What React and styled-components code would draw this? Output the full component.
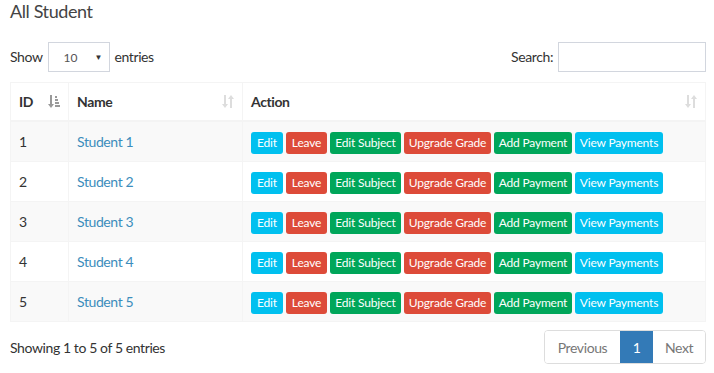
import styled, { createGlobalStyle } from "styled-components";

const GlobalStyle = createGlobalStyle`
  html, body {
    margin: 0;
    padding: 0;
    background: #fff;
  }
  body {
    font-family: Lato, "Open Sans", sans-serif;
    font-size: 14px;
    letter-spacing: -0.4px;
    color: #333;
  }
`;

const students = [1, 2, 3, 4, 5].map((n) => ({ id: n, name: `Student ${n}` }));

const actions = [
  { text: "Edit", color: "#00c0ef", w: 32 },
  { text: "Leave", color: "#dd4b39", w: 41 },
  { text: "Edit Subject", color: "#00a65a", w: 71 },
  { text: "Upgrade Grade", color: "#dd4b39", w: 87 },
  { text: "Add Payment", color: "#00a65a", w: 78 },
  { text: "View Payments", color: "#00c0ef", w: 88 },
];

function SortAsc() {
  return (
    <svg width="12" height="14" viewBox="0 0 12 14">
      <g fill="#999">
        <rect x="2" y="0" width="2" height="9" />
        <polygon points="0,9 6,9 3,13" />
        <rect x="7" y="1" width="2" height="2" />
        <rect x="7" y="4" width="3" height="2" />
        <rect x="7" y="7" width="4" height="2" />
        <rect x="7" y="10" width="5" height="2" />
      </g>
    </svg>
  );
}

function SortBoth() {
  return (
    <svg width="12" height="14" viewBox="0 0 12 14">
      <g fill="#ddd">
        <rect x="2" y="0" width="2" height="9" />
        <polygon points="0,9 6,9 3,13" />
        <rect x="8" y="4" width="2" height="9" />
        <polygon points="6,4 12,4 9,0" />
      </g>
    </svg>
  );
}

export default function App() {
  return (
    <Page>
      <GlobalStyle />
      <Title>All Student</Title>
      <Controls>
        <Label>
          Show
          <Select>
            <span>10</span>
            <Caret>▼</Caret>
          </Select>
          entries
        </Label>
        <Label>
          Search:
          <SearchInput />
        </Label>
      </Controls>
      <Table>
        <colgroup>
          <col style={{ width: 58 }} />
          <col style={{ width: 174 }} />
          <col />
        </colgroup>
        <thead>
          <tr>
            <Th>
              <HeadCell>
                ID <SortAsc />
              </HeadCell>
            </Th>
            <Th>
              <HeadCell>
                Name <SortBoth />
              </HeadCell>
            </Th>
            <Th>
              <HeadCell>
                Action <SortBoth />
              </HeadCell>
            </Th>
          </tr>
        </thead>
        <tbody>
          {students.map((s, i) => (
            <Row key={s.id} $striped={i % 2 === 0}>
              <Td>{s.id}</Td>
              <Td>
                <NameLink href="#">{s.name}</NameLink>
              </Td>
              <Td>
                <Buttons>
                  {actions.map((a) => (
                    <ActionButton key={a.text} $color={a.color} $w={a.w}>
                      {a.text}
                    </ActionButton>
                  ))}
                </Buttons>
              </Td>
            </Row>
          ))}
        </tbody>
      </Table>
      <Footer>
        <Info>Showing 1 to 5 of 5 entries</Info>
        <Pagination>
          <PageItem $w={75}>Previous</PageItem>
          <PageItem $w={33} $active>
            1
          </PageItem>
          <PageItem $w={52}>Next</PageItem>
        </Pagination>
      </Footer>
    </Page>
  );
}

const Page = styled.div`
  padding: 0 8px 0 10px;
  width: 696px;
`;

const Title = styled.h3`
  margin: 0;
  font-size: 18px;
  font-weight: 400;
  color: #444;
  line-height: 22px;
`;

const Controls = styled.div`
  display: flex;
  justify-content: space-between;
  align-items: center;
  margin-top: 20px;
  height: 30px;
`;

const Label = styled.label`
  display: flex;
  align-items: center;
  gap: 5px;
  font-size: 14px;
  color: #333;
  margin-top: -2px;
`;

const Select = styled.div`
  box-sizing: border-box;
  width: 62px;
  height: 30px;
  margin-top: 2px;
  border: 1px solid #d2d6de;
  display: flex;
  align-items: center;
  justify-content: space-between;
  padding: 0 6px 0 15px;
  font-size: 12px;
  letter-spacing: 0;
  color: #555;
`;

const Caret = styled.span`
  font-size: 8px;
  color: #333;
`;

const SearchInput = styled.div`
  box-sizing: border-box;
  width: 148px;
  height: 30px;
  margin-top: 2px;
  border: 1px solid #d2d6de;
`;

const Table = styled.table`
  width: 696px;
  table-layout: fixed;
  margin-top: 10px;
  border-collapse: collapse;
  border: 1px solid #f4f4f4;
`;

const Th = styled.th`
  height: 37px;
  padding: 0 8px;
  text-align: left;
  font-weight: 700;
  font-size: 14px;
  color: #333;
  border: 1px solid #f4f4f4;
  border-bottom: 2px solid #f4f4f4;
`;

const HeadCell = styled.div`
  display: flex;
  align-items: center;
  justify-content: space-between;
  svg {
    margin-top: 1px;
  }
`;

const Row = styled.tr`
  background: ${(p) => (p.$striped ? "#f9f9f9" : "#fff")};
`;

const Td = styled.td`
  height: 39px;
  padding: 0 8px;
  border: 1px solid #f4f4f4;
  font-size: 14px;
  color: #333;
`;

const NameLink = styled.a`
  color: #3c8dbc;
  text-decoration: none;
`;

const Buttons = styled.div`
  display: flex;
  gap: 3px;
  padding-top: 2px;
`;

const ActionButton = styled.span`
  box-sizing: border-box;
  width: ${(p) => p.$w}px;
  height: 22px;
  display: inline-flex;
  align-items: center;
  justify-content: center;
  background: ${(p) => p.$color};
  color: #fff;
  font-size: 12px;
  letter-spacing: -0.2px;
  border-radius: 3px;
  white-space: nowrap;
`;

const Footer = styled.div`
  display: flex;
  justify-content: space-between;
  align-items: center;
  margin-top: 8px;
`;

const Info = styled.div`
  font-size: 14px;
  color: #333;
`;

const Pagination = styled.div`
  display: flex;
  height: 34px;
  border: 1px solid #ddd;
  border-radius: 4px;
  overflow: hidden;
  box-sizing: border-box;
`;

const PageItem = styled.span`
  width: ${(p) => p.$w}px;
  display: flex;
  align-items: center;
  justify-content: center;
  font-size: 14px;
  background: ${(p) => (p.$active ? "#337ab7" : "#fff")};
  color: ${(p) => (p.$active ? "#fff" : "#777")};
`;
